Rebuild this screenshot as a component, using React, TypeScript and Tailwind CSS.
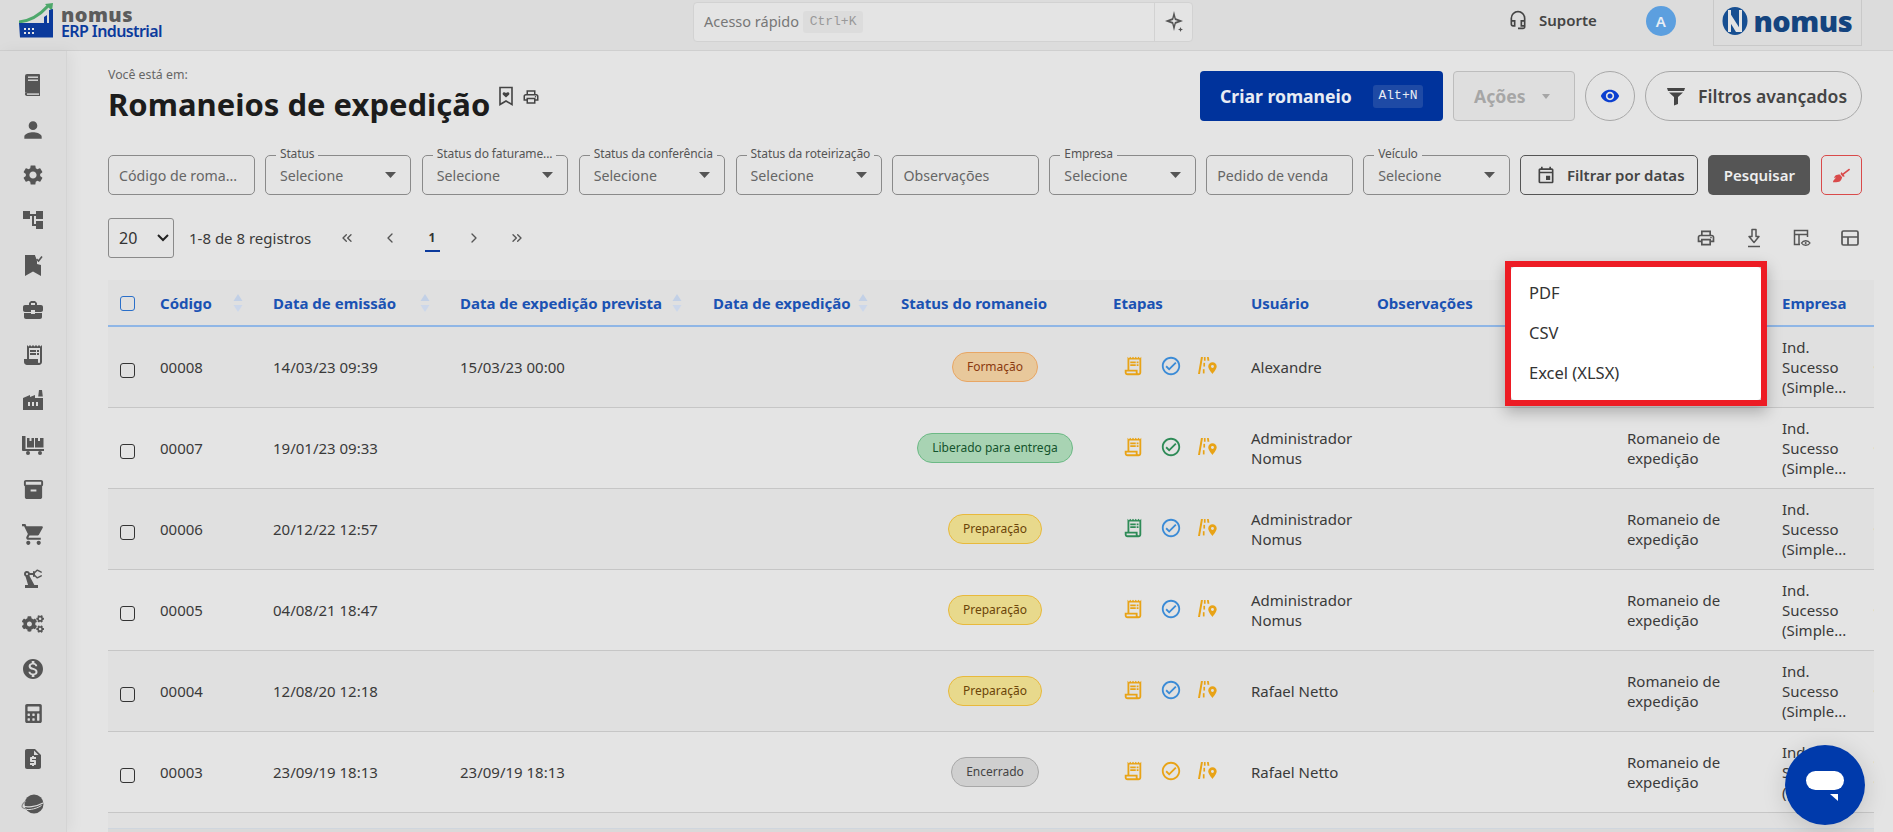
import type { ReactNode } from "react";
import {
  MdAccountTree,
  MdBusinessCenter,
  MdFactory,
  MdInventory2,
  MdMonetizationOn,
  MdOutlineCheckCircle,
  MdOutlineEvent,
  MdOutlineHeadsetMic,
  MdOutlineLocalPrintshop,
  MdOutlineReceiptLong,
  MdPerson,
  MdPrecisionManufacturing,
  MdReceiptLong,
  MdRemoveRedEye,
  MdRequestQuote,
  MdSettings,
  MdShoppingCart,
} from "react-icons/md";
import { FaBroom, FaCalculator, FaCogs } from "react-icons/fa";
import {
  ChevronLeft,
  ChevronRight,
  ChevronsLeft,
  ChevronsRight,
} from "lucide-react";

type Row = {
  code: string;
  issued: string;
  planned?: string;
  status: string;
  pill: string;
  doc: string;
  check: string;
  user: string;
  dots?: number;
};

const rows: Row[] = [
  {
    code: "00008",
    issued: "14/03/23 09:39",
    planned: "15/03/23 00:00",
    status: "Formação",
    pill: "bg-[#e8c89b] border-[#e8a664] text-[#8a3a10]",
    doc: "text-[#e8a317]",
    check: "text-[#3b8bd6]",
    user: "Alexandre",
  },
  {
    code: "00007",
    issued: "19/01/23 09:33",
    status: "Liberado para entrega",
    pill: "bg-[#a8d3b3] border-[#6cb985] text-[#14532d]",
    doc: "text-[#e8a317]",
    check: "text-[#2e8b57]",
    user: "Administrador Nomus",
  },
  {
    code: "00006",
    issued: "20/12/22 12:57",
    status: "Preparação",
    pill: "bg-[#e8d98c] border-[#e8b93c] text-[#6b4408]",
    doc: "text-[#2e8b57]",
    check: "text-[#3b8bd6]",
    user: "Administrador Nomus",
  },
  {
    code: "00005",
    issued: "04/08/21 18:47",
    status: "Preparação",
    pill: "bg-[#e8d98c] border-[#e8b93c] text-[#6b4408]",
    doc: "text-[#e8a317]",
    check: "text-[#3b8bd6]",
    user: "Administrador Nomus",
  },
  {
    code: "00004",
    issued: "12/08/20 12:18",
    status: "Preparação",
    pill: "bg-[#e8d98c] border-[#e8b93c] text-[#6b4408]",
    doc: "text-[#e8a317]",
    check: "text-[#3b8bd6]",
    user: "Rafael Netto",
  },
  {
    code: "00003",
    issued: "23/09/19 18:13",
    planned: "23/09/19 18:13",
    status: "Encerrado",
    pill: "bg-[#cfcfcf] border-[#a8a8a8] text-[#444444]",
    doc: "text-[#e8a317]",
    check: "text-[#e8a317]",
    user: "Rafael Netto",
    dots: 2,
  },
  {
    code: "00002",
    issued: "23/09/19 18:10",
    status: "Encerrado",
    pill: "bg-[#cfcfcf] border-[#a8a8a8] text-[#444444]",
    doc: "text-[#e8a317]",
    check: "text-[#e8a317]",
    user: "Rafael Netto",
  },
];

function BookIcon() {
  return (
    <svg width="22" height="24" viewBox="0 0 22 24" fill="none">
      <path d="M5 1h12a1 1 0 0 1 1 1v17H5.500A2.500 2.500 0 0 0 3 20V3a2 2 0 0 1 2-2z" fill="#555" />
      <path d="M3 20.500A2 2 0 0 1 5 19h13v4H5a2 2 0 0 1-2-2.500z" fill="#555" />
      <rect x="5" y="20.400" width="12" height="1.400" fill="#dcdcdc" />
      <rect x="6" y="3.500" width="10" height="1.400" fill="#dcdcdc" />
      <rect x="6" y="6.500" width="10" height="1.400" fill="#dcdcdc" />
    </svg>
  );
}

function BookmarkCheckIcon() {
  return (
    <svg width="22" height="24" viewBox="0 0 22 24" fill="#555">
      <path d="M3 2h10l2 6v3l4 1v11l-8-4.500L3 23z" />
      <path d="M13 1l3 9 4-1V0z" fill="#dcdcdc" />
      <path d="M14.500 6l2 2 3.500-4.500" fill="none" stroke="#555" strokeWidth="1.600" />
    </svg>
  );
}

function PalletIcon() {
  return (
    <svg width="24" height="22" viewBox="0 0 24 22" fill="#555">
      <path d="M1 2h3.500v13H23v2H2a1 1 0 0 1-1-1z" />
      <rect x="6" y="4" width="7" height="9.500" />
      <rect x="14" y="4" width="8.500" height="9.500" />
      <rect x="8.500" y="4" width="2" height="3" fill="#dcdcdc" />
      <rect x="17" y="4" width="2" height="3" fill="#dcdcdc" />
      <circle cx="7" cy="19" r="2" />
      <circle cx="19" cy="19" r="2" />
    </svg>
  );
}

function PlanetIcon() {
  return (
    <svg width="24" height="22" viewBox="0 0 24 22" fill="#555">
      <circle cx="13" cy="11" r="9.500" />
      <path d="M1 13c5 1.500 14 1 21-3" fill="none" stroke="#dcdcdc" strokeWidth="1.200" />
      <path d="M1.500 16c5 1 12 1 19-3.500" fill="none" stroke="#dcdcdc" strokeWidth="1" />
      <path d="M5 8c-3 2-4 4-4 5.500s3 2.500 5 2.500" fill="none" stroke="#8a8a8a" strokeWidth="1.200" />
    </svg>
  );
}

function RoadPinIcon() {
  return (
    <svg width="19" height="19" viewBox="0 0 18 18" fill="currentColor">
      <path d="M2.800 1h1.900L1.900 17H0z" />
      <rect x="5.600" y="1" width="1.600" height="3.500" />
      <rect x="5.100" y="6.500" width="1.600" height="3.500" />
      <rect x="4.600" y="12.500" width="1.600" height="4" />
      <path d="M8.500 1h1.700l.6 3.500H9z" />
      <path
        fillRule="evenodd"
        d="M13.700 6a4 4 0 0 1 4 4c0 2.500-4 7-4 7s-4-4.500-4-7a4 4 0 0 1 4-4zm0 2.600a1.400 1.400 0 1 0 0 2.800 1.400 1.400 0 0 0 0-2.800z"
      />
    </svg>
  );
}

function BookmarkHeartIcon() {
  return (
    <svg width="16" height="20" viewBox="0 0 16 20" fill="none" className="text-[#444]">
      <path d="M2 1.500h12v17l-6-3.500-6 3.500z" stroke="currentColor" strokeWidth="1.600" />
      <path
        d="M8 11.500 5 8.700C3.800 7.300 5.600 5.200 8 7c2.400-1.800 4.200.3 3 1.700z"
        fill="currentColor"
      />
    </svg>
  );
}

function SparkIcon() {
  return (
    <svg width="20" height="24" viewBox="0 0 20 24" fill="#555">
      <path d="M10 1l1.800 7.200L19 11l-7.200 2.800L10 21l-1.800-7.200L1 11l7.200-2.800z" />
      <path d="M10 7l.9 3.100L14 11l-3.100.9L10 15l-.9-3.100L6 11l3.100-.9z" fill="#e4e4e4" />
      <path d="M16.500 17l.7 1.800 1.800.7-1.800.7-.7 1.800-.7-1.800-1.800-.7 1.800-.7z" />
    </svg>
  );
}

function FunnelIcon() {
  return (
    <svg width="20" height="20" viewBox="0 0 20 20" fill="#444">
      <path d="M1 2h18l-1 3H2z" />
      <path d="M3 6.500h14L12 11v7l-4 1.500V11z" />
    </svg>
  );
}

function DownloadIcon() {
  return (
    <svg width="18" height="20" viewBox="0 0 18 20" fill="none" stroke="#555" strokeWidth="1.500">
      <path d="M7 1.500h4v7h3l-5 6-5-6h3z" strokeLinejoin="round" />
      <path d="M3 18.500h12" />
    </svg>
  );
}

function TableEyeIcon() {
  return (
    <svg width="20" height="20" viewBox="0 0 20 20" fill="none" stroke="#555" strokeWidth="1.500">
      <path d="M8 16.500H2.500v-14h13V9" />
      <path d="M2.500 6.500h13M7 6.500v10" />
      <path d="M9.500 15c1.800-3 6.700-3 8.500 0-1.800 3-6.700 3-8.500 0z" strokeWidth="1.300" />
      <circle cx="13.700" cy="15" r="1" fill="#555" stroke="none" />
    </svg>
  );
}

function LayoutIcon() {
  return (
    <svg width="18" height="16" viewBox="0 0 18 16" fill="none" stroke="#555" strokeWidth="1.700">
      <rect x="1" y="1" width="16" height="14" rx="1.500" />
      <path d="M1 7h16M7 7v8" />
    </svg>
  );
}

function SortArrows() {
  return (
    <svg width="10" height="20" viewBox="0 0 10 20" fill="#c2d0e6">
      <path d="M5 1l4.500 7h-9z" />
      <path d="M5 19l4.500-7h-9z" fill="#ccd7ea" />
    </svg>
  );
}

function ErpLogo() {
  return (
    <div className="flex items-start">
      <svg width="36" height="36" viewBox="0 0 36 36" className="mt-[3px] mr-[6px] ml-[19px]">
        <path d="M0 19C10 18 20 13 29 3" fill="none" stroke="#4ea86b" strokeWidth="3" />
        <path d="M26 1l8-1-1 8z" fill="#4ea86b" />
        <path d="M0 20h25v-6l3-2v8h2V7l4-1v28.500H1z" fill="#0b3a9c" />
        <rect x="5" y="25" width="2" height="2" fill="#e4e4e4" />
        <rect x="9" y="25" width="2" height="2" fill="#e4e4e4" />
        <rect x="13" y="25" width="2" height="2" fill="#e4e4e4" />
        <rect x="5" y="29" width="2" height="2" fill="#e4e4e4" />
        <rect x="9" y="29" width="2" height="2" fill="#e4e4e4" />
        <rect x="13" y="29" width="2" height="2" fill="#e4e4e4" />
      </svg>
      <div className="flex flex-col pt-[6px]">
        <span className="text-[20px] leading-[17px] font-black text-[#5c5c5c] tracking-[0.4px]">nomus</span>
        <span className="text-[16px] leading-[17px] font-semibold text-[#0b3a9c] tracking-[-0.6px] whitespace-nowrap">
          ERP Industrial
        </span>
      </div>
    </div>
  );
}

function NomusLogo() {
  return (
    <div className="w-[149px] h-[46px] border-x border-b border-[#c9c9c9] flex items-center justify-center gap-[5px] pb-[4px] text-[#14447f]">
      <svg width="26" height="28" viewBox="0 0 26 28">
        <ellipse cx="13" cy="14" rx="12.500" ry="14" fill="#174f92" />
        <path d="M6 3l14 22h-6L6 12z" fill="#e4e4e4" />
        <rect x="6" y="3" width="3" height="22" fill="#e4e4e4" />
        <rect x="17" y="3" width="3" height="22" fill="#e4e4e4" />
      </svg>
      <span className="text-[29px] leading-[28px] font-black tracking-[-0.5px]">nomus</span>
    </div>
  );
}

function SelectField({ label }: { label: string }) {
  return (
    <div className="relative w-[146.500px] h-[40px] shrink-0 border border-[#8a8a8a] rounded-[5px] flex items-center justify-between pl-[14px] pr-[14px]">
      <span className="absolute left-[10px] top-[-10px] bg-[#e4e4e4] px-[4px] text-[12px] leading-[16px] text-[#555] whitespace-nowrap tracking-[-0.1px]">
        {label}
      </span>
      <span className="text-[14.200px] text-[#666] pt-[1px]">Selecione</span>
      <svg width="11" height="6" viewBox="0 0 11 6" fill="#555">
        <path d="M0 0h11L5.500 6z" />
      </svg>
    </div>
  );
}

function TextField({ text }: { text: string }) {
  return (
    <div className="w-[146.500px] h-[40px] shrink-0 border border-[#8a8a8a] rounded-[5px] flex items-center px-[10px]">
      <span className="text-[14.200px] text-[#666] pt-[1px] whitespace-nowrap">{text}</span>
    </div>
  );
}

function Th({ children, sort }: { children?: ReactNode; sort?: number }) {
  return (
    <th className="p-0 pl-[12px] pt-[1px] text-left align-middle font-bold text-[15px] text-[#1a52b3] border-b-2 border-[#8fb6e6]">
      <div className="flex items-center">
        <span className="whitespace-nowrap">{children}</span>
        {sort !== undefined && (
          <span className="shrink-0" style={{ marginLeft: sort }}>
            <SortArrows />
          </span>
        )}
      </div>
    </th>
  );
}

function Checkbox({ blue }: { blue?: boolean }) {
  return (
    <div
      className={
        blue
          ? "w-[15px] h-[15px] rounded-[3px] border border-[#2a6fc9] mt-[2px]"
          : "w-[15px] h-[15px] rounded-[3px] border border-[#333] mt-[7px]"
      }
    />
  );
}

const sidebarIcons: ReactNode[] = [
  <BookIcon />,
  <MdPerson size={26} />,
  <MdSettings size={24} />,
  <MdAccountTree size={24} />,
  <BookmarkCheckIcon />,
  <MdBusinessCenter size={24} />,
  <MdReceiptLong size={24} />,
  <MdFactory size={24} />,
  <PalletIcon />,
  <MdInventory2 size={23} />,
  <MdShoppingCart size={25} />,
  <MdPrecisionManufacturing size={24} />,
  <FaCogs size={22} />,
  <MdMonetizationOn size={24} />,
  <FaCalculator size={19} />,
  <MdRequestQuote size={24} />,
  <PlanetIcon />,
];

export default function App() {
  return (
    <div className="relative w-full h-[832px] overflow-hidden flex flex-col bg-[#e4e4e4] font-['Noto_Sans',sans-serif] text-[#3a3a3a]">
      <header className="h-[51px] shrink-0 bg-[#dcdcdc] border-b border-[#cfcfcf] flex items-start">
        <div className="w-[693px] shrink-0">
          <ErpLogo />
        </div>
        <div className="mt-[2px] w-[500px] h-[40px] shrink-0 bg-[#e4e4e4] border border-[#d2d2d2] rounded-[4px] flex items-center">
          <div className="flex-1 flex items-center pl-[10px] gap-[4px]">
            <span className="text-[14.500px] text-[#777]">Acesso rápido</span>
            <span className="h-[22px] w-[60px] bg-[#dcdcdc] rounded-[3px] flex items-center justify-center font-['Liberation_Mono',monospace] text-[13px] text-[#999]">
              Ctrl+K
            </span>
          </div>
          <div className="w-[38px] h-full border-l border-[#d2d2d2] flex items-center justify-center">
            <SparkIcon />
          </div>
        </div>
        <div className="flex-1 flex items-start">
          <div className="ml-[315px] mt-[9px] flex items-center gap-[11px] text-[#444]">
            <MdOutlineHeadsetMic size={20} />
            <span className="text-[15px] font-semibold">Suporte</span>
          </div>
          <div className="ml-[49px] mt-[6px] w-[30px] h-[30px] rounded-full bg-[#5c9fdf] text-[#e8eef5] flex items-center justify-center text-[15px] font-semibold">
            A
          </div>
          <div className="ml-[37px]">
            <NomusLogo />
          </div>
        </div>
      </header>

      <div className="flex-1 flex min-h-0">
        <aside className="relative z-10 w-[67px] shrink-0 bg-[#dcdcdc] border-r border-[#d4d4d4] shadow-[4px_0_14px_rgba(0,0,0,0.05)] flex flex-col items-center pt-[12px] text-[#555]">
          {sidebarIcons.map((icon, i) => (
            <div key={i} className="h-[44.900px] shrink-0 flex items-center justify-center">
              {icon}
            </div>
          ))}
        </aside>

        <main className="flex-1 min-w-0 pl-[41px] pr-[19px] flex flex-col">
          <div className="pr-[12px]">
            <div className="flex items-start justify-between pt-[16px] h-[84px]">
              <div>
                <div className="text-[12.300px] leading-[16px] text-[#666]">Você está em:</div>
                <div className="flex items-start mt-[2px]">
                  <h1 className="text-[31px] leading-[38px] font-bold text-[#1c1c1c] whitespace-nowrap">
                    Romaneios de expedição
                  </h1>
                  <span className="ml-[8px] mt-[1px]">
                    <BookmarkHeartIcon />
                  </span>
                  <span className="ml-[8px] mt-[3px] text-[#444]">
                    <MdOutlineLocalPrintshop size={18} />
                  </span>
                </div>
              </div>
              <div className="mt-[4px] flex items-center gap-[10px]">
                <div className="w-[243px] h-[50px] bg-[#00339c] rounded-[4px] flex items-center pl-[20px] text-[#e8ecf4]">
                  <span className="text-[17.600px] font-bold whitespace-nowrap">Criar romaneio</span>
                  <span className="ml-auto mr-[20px] w-[50px] h-[23px] bg-[#1e4aa5] rounded-[3px] flex items-center justify-center font-['Liberation_Mono',monospace] text-[13px]">
                    Alt+N
                  </span>
                </div>
                <div className="w-[122px] h-[50px] bg-[#dedede] border border-[#bdbdbd] rounded-[4px] flex items-center pl-[20px] gap-[16px] text-[#a6a6a6]">
                  <span className="text-[17.600px] font-bold">Ações</span>
                  <svg width="8" height="5" viewBox="0 0 8 5" fill="#a6a6a6">
                    <path d="M0 0h8L4 5z" />
                  </svg>
                </div>
                <div className="w-[50px] h-[50px] rounded-full border border-[#a8a8a8] flex items-center justify-center text-[#0b3fd0]">
                  <MdRemoveRedEye size={20} />
                </div>
                <div className="w-[217px] h-[50px] rounded-full border border-[#a8a8a8] flex items-center pl-[20px] gap-[12px] text-[#444]">
                  <FunnelIcon />
                  <span className="text-[17.600px] font-semibold whitespace-nowrap">Filtros avançados</span>
                </div>
              </div>
            </div>

            <div className="mt-[20px] flex items-center gap-[10.400px]">
              <TextField text="Código de roma..." />
              <SelectField label="Status" />
              <SelectField label="Status do faturame..." />
              <SelectField label="Status da conferência" />
              <SelectField label="Status da roteirização" />
              <TextField text="Observações" />
              <SelectField label="Empresa" />
              <TextField text="Pedido de venda" />
              <SelectField label="Veículo" />
              <div className="w-[178px] h-[40px] shrink-0 border border-[#555] rounded-[5px] flex items-center pl-[15px] gap-[11px] text-[#444]">
                <MdOutlineEvent size={20} />
                <span className="text-[15px] font-semibold whitespace-nowrap">Filtrar por datas</span>
              </div>
              <div className="w-[102px] h-[40px] shrink-0 bg-[#555555] rounded-[5px] flex items-center justify-center text-[#eeeeee] text-[15px] font-semibold">
                Pesquisar
              </div>
              <div className="w-[41.500px] h-[40px] shrink-0 border border-[#d94a4a] rounded-[5px] flex items-center justify-center text-[#d94a4a]">
                <FaBroom size={17} />
              </div>
            </div>

            <div className="mt-[23px] h-[40px] flex items-center">
              <div className="w-[66px] h-[40px] border border-[#8a8a8a] rounded-[3px] flex items-center pl-[10px] gap-[20px] text-[#333]">
                <span className="text-[16px]">20</span>
                <svg width="12" height="8" viewBox="0 0 12 8" fill="none" stroke="#222" strokeWidth="2">
                  <path d="M1 1l5 5 5-5" />
                </svg>
              </div>
              <span className="ml-[15px] w-[137px] text-[15px] whitespace-nowrap">1-8 de 8 registros</span>
              <div className="flex items-center text-[#555]">
                <span className="w-[42.400px] flex justify-center"><ChevronsLeft size={16} /></span>
                <span className="w-[42.400px] flex justify-center"><ChevronLeft size={16} /></span>
                <span className="relative w-[42.400px] flex justify-center text-[12px] font-bold text-[#333]">
                  1
                  <span className="absolute left-[14px] top-[21px] w-[15px] h-[2px] bg-[#0b3a9c]" />
                </span>
                <span className="w-[42.400px] flex justify-center"><ChevronRight size={16} /></span>
                <span className="w-[42.400px] flex justify-center"><ChevronsRight size={16} /></span>
              </div>
              <div className="ml-auto flex items-center gap-[29px] pr-[3px] text-[#555]">
                <MdOutlineLocalPrintshop size={20} />
                <DownloadIcon />
                <TableEyeIcon />
                <LayoutIcon />
              </div>
            </div>
          </div>

          <div className="relative mt-[22px] flex-1 min-h-0 overflow-hidden">
            <table className="table-fixed border-collapse w-[1800px]">
              <colgroup>
                <col className="w-[40px]" />
                <col className="w-[113px]" />
                <col className="w-[187px]" />
                <col className="w-[253px]" />
                <col className="w-[188px]" />
                <col className="w-[212px]" />
                <col className="w-[138px]" />
                <col className="w-[126px]" />
                <col className="w-[250px]" />
                <col className="w-[155px]" />
                <col className="w-[91px]" />
                <col className="w-[47px]" />
              </colgroup>
              <thead>
                <tr className="h-[46px] bg-[#e0e0e0]">
                  <th className="p-0 pl-[12px] border-b-2 border-[#8fb6e6]">
                    <Checkbox blue />
                  </th>
                  <Th sort={21}>Código</Th>
                  <Th sort={24}>Data de emissão</Th>
                  <Th sort={10}>Data de expedição prevista</Th>
                  <Th sort={7}>Data de expedição</Th>
                  <Th>Status do romaneio</Th>
                  <Th>Etapas</Th>
                  <Th>Usuário</Th>
                  <Th>Observações</Th>
                  <Th />
                  <Th>Empresa</Th>
                  <Th />
                </tr>
              </thead>
              <tbody>
                {rows.map((row, i) => (
                  <tr
                    key={row.code}
                    className={
                      i % 2 === 0
                        ? "h-[81px] bg-[#e0e0e0] border-b border-[#c6c6c6] text-[15px] leading-[20px]"
                        : "h-[81px] bg-[#e4e4e4] border-b border-[#c6c6c6] text-[15px] leading-[20px]"
                    }
                  >
                    <td className="p-0 pl-[12px]">
                      <Checkbox />
                    </td>
                    <td className="p-0 pl-[12px]">{row.code}</td>
                    <td className="p-0 pl-[12px]">{row.issued}</td>
                    <td className="p-0 pl-[12px]">{row.planned}</td>
                    <td className="p-0 pl-[12px]" />
                    <td className="p-0">
                      <div className="flex justify-center">
                        <span
                          className={`h-[30px] px-[14px] rounded-full border-[1.500px] text-[12px] flex items-center whitespace-nowrap ${row.pill}`}
                        >
                          {row.status}
                        </span>
                      </div>
                    </td>
                    <td className="p-0">
                      <div className="flex items-center pl-[21px] gap-[16px] -mt-[2px]">
                        <span className={row.doc}>
                          <MdOutlineReceiptLong size={22} />
                        </span>
                        <span className={row.check}>
                          <MdOutlineCheckCircle size={22} />
                        </span>
                        <span className="text-[#e8a317]">
                          <RoadPinIcon />
                        </span>
                      </div>
                    </td>
                    <td className="p-0 pl-[12px] pr-[8px]">{row.user}</td>
                    <td className="p-0" />
                    <td className="p-0 pl-[12px] pr-[30px]">Romaneio de expedição</td>
                    <td className="p-0 pl-[12px] pr-[8px]">Ind. Sucesso (Simple...</td>
                    <td className="p-0 pl-[12px] text-[#444]">
                      {row.dots === 2 ? (
                        <>
                          •<br />•
                        </>
                      ) : (
                        "•"
                      )}
                    </td>
                  </tr>
                ))}
              </tbody>
            </table>
            <div className="absolute bottom-0 left-0 right-0 h-[4px] bg-[#d9d9d9] border-t border-[#cfd6de]" />
          </div>
        </main>
      </div>

      <div className="absolute left-[1505px] top-[261px] w-[262px] h-[145px] border-[6px] border-[#ed1c24] bg-[#c9c9c9] shadow-[0_6px_14px_rgba(0,0,0,0.25)]">
        <div className="w-full h-full bg-white rounded-[4px] flex flex-col justify-center pl-[18px] text-[#333] text-[16.500px]">
          <div className="h-[40px] flex items-center">PDF</div>
          <div className="h-[40px] flex items-center">CSV</div>
          <div className="h-[40px] flex items-center">Excel (XLSX)</div>
        </div>
      </div>

      <div className="absolute left-[1785px] top-[745px] w-[80px] h-[80px] rounded-full bg-[#003aab] shadow-[0_4px_24px_rgba(0,0,0,0.15)] flex items-center justify-center">
        <svg width="40" height="30" viewBox="0 0 40 30" fill="#fff" className="mt-[2px]">
          <rect x="1" y="0" width="38" height="19" rx="9.500" />
          <path d="M25 23h8v7z" />
        </svg>
      </div>
    </div>
  );
}
